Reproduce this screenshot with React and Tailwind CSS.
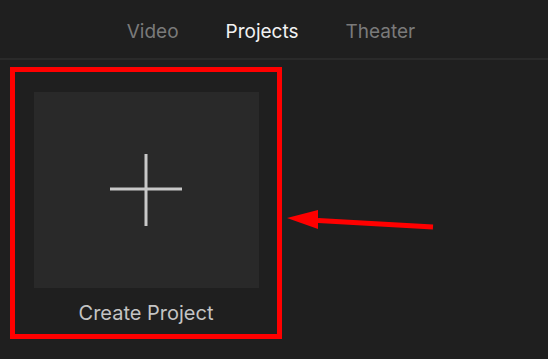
export default function App() {
  const tabs = [
    { label: "Video", active: false },
    { label: "Projects", active: true },
    { label: "Theater", active: false },
  ];

  return (
    <div className="relative h-[359px] w-[548px] overflow-hidden bg-[#1f1f1f] font-['Inter',sans-serif]">
      {/* Tabs */}
      <div className="flex h-[58px] items-center justify-center gap-[47px] pr-[6px] pt-[6px]">
        {tabs.map((tab) => (
          <span
            key={tab.label}
            className={`text-[19px] ${tab.active ? "text-[#f2f2f2]" : "text-[#7a7a7a]"}`}
          >
            {tab.label}
          </span>
        ))}
      </div>
      <div className="h-[2px] bg-[#2a2a2a]"></div>

      {/* Create project card */}
      <div className="pl-[10px] pt-[7px]">
        <div className="flex h-[272px] w-[272px] flex-col items-center border-[5px] border-[#ff0000] pt-[20px]">
          <div className="flex h-[196px] w-[225px] items-center justify-center bg-[#292929]">
            <svg width="72" height="72" viewBox="0 0 72 72">
              <line x1="36" y1="0" x2="36" y2="72" stroke="#c8c8c8" strokeWidth="3" />
              <line x1="0" y1="35" x2="72" y2="35" stroke="#c8c8c8" strokeWidth="3" />
            </svg>
          </div>
          <p className="mt-[10px] text-[20px] text-[#c4c4c4]">Create Project</p>
        </div>
      </div>

      {/* Arrow annotation */}
      <svg
        className="absolute left-0 top-0"
        width="548"
        height="359"
        viewBox="0 0 548 359"
      >
        <line x1="318" y1="220.5" x2="433" y2="227" stroke="#ff0000" strokeWidth="5" />
        <polygon points="287,218 318,210 318,229" fill="#ff0000" />
      </svg>
    </div>
  );
}
